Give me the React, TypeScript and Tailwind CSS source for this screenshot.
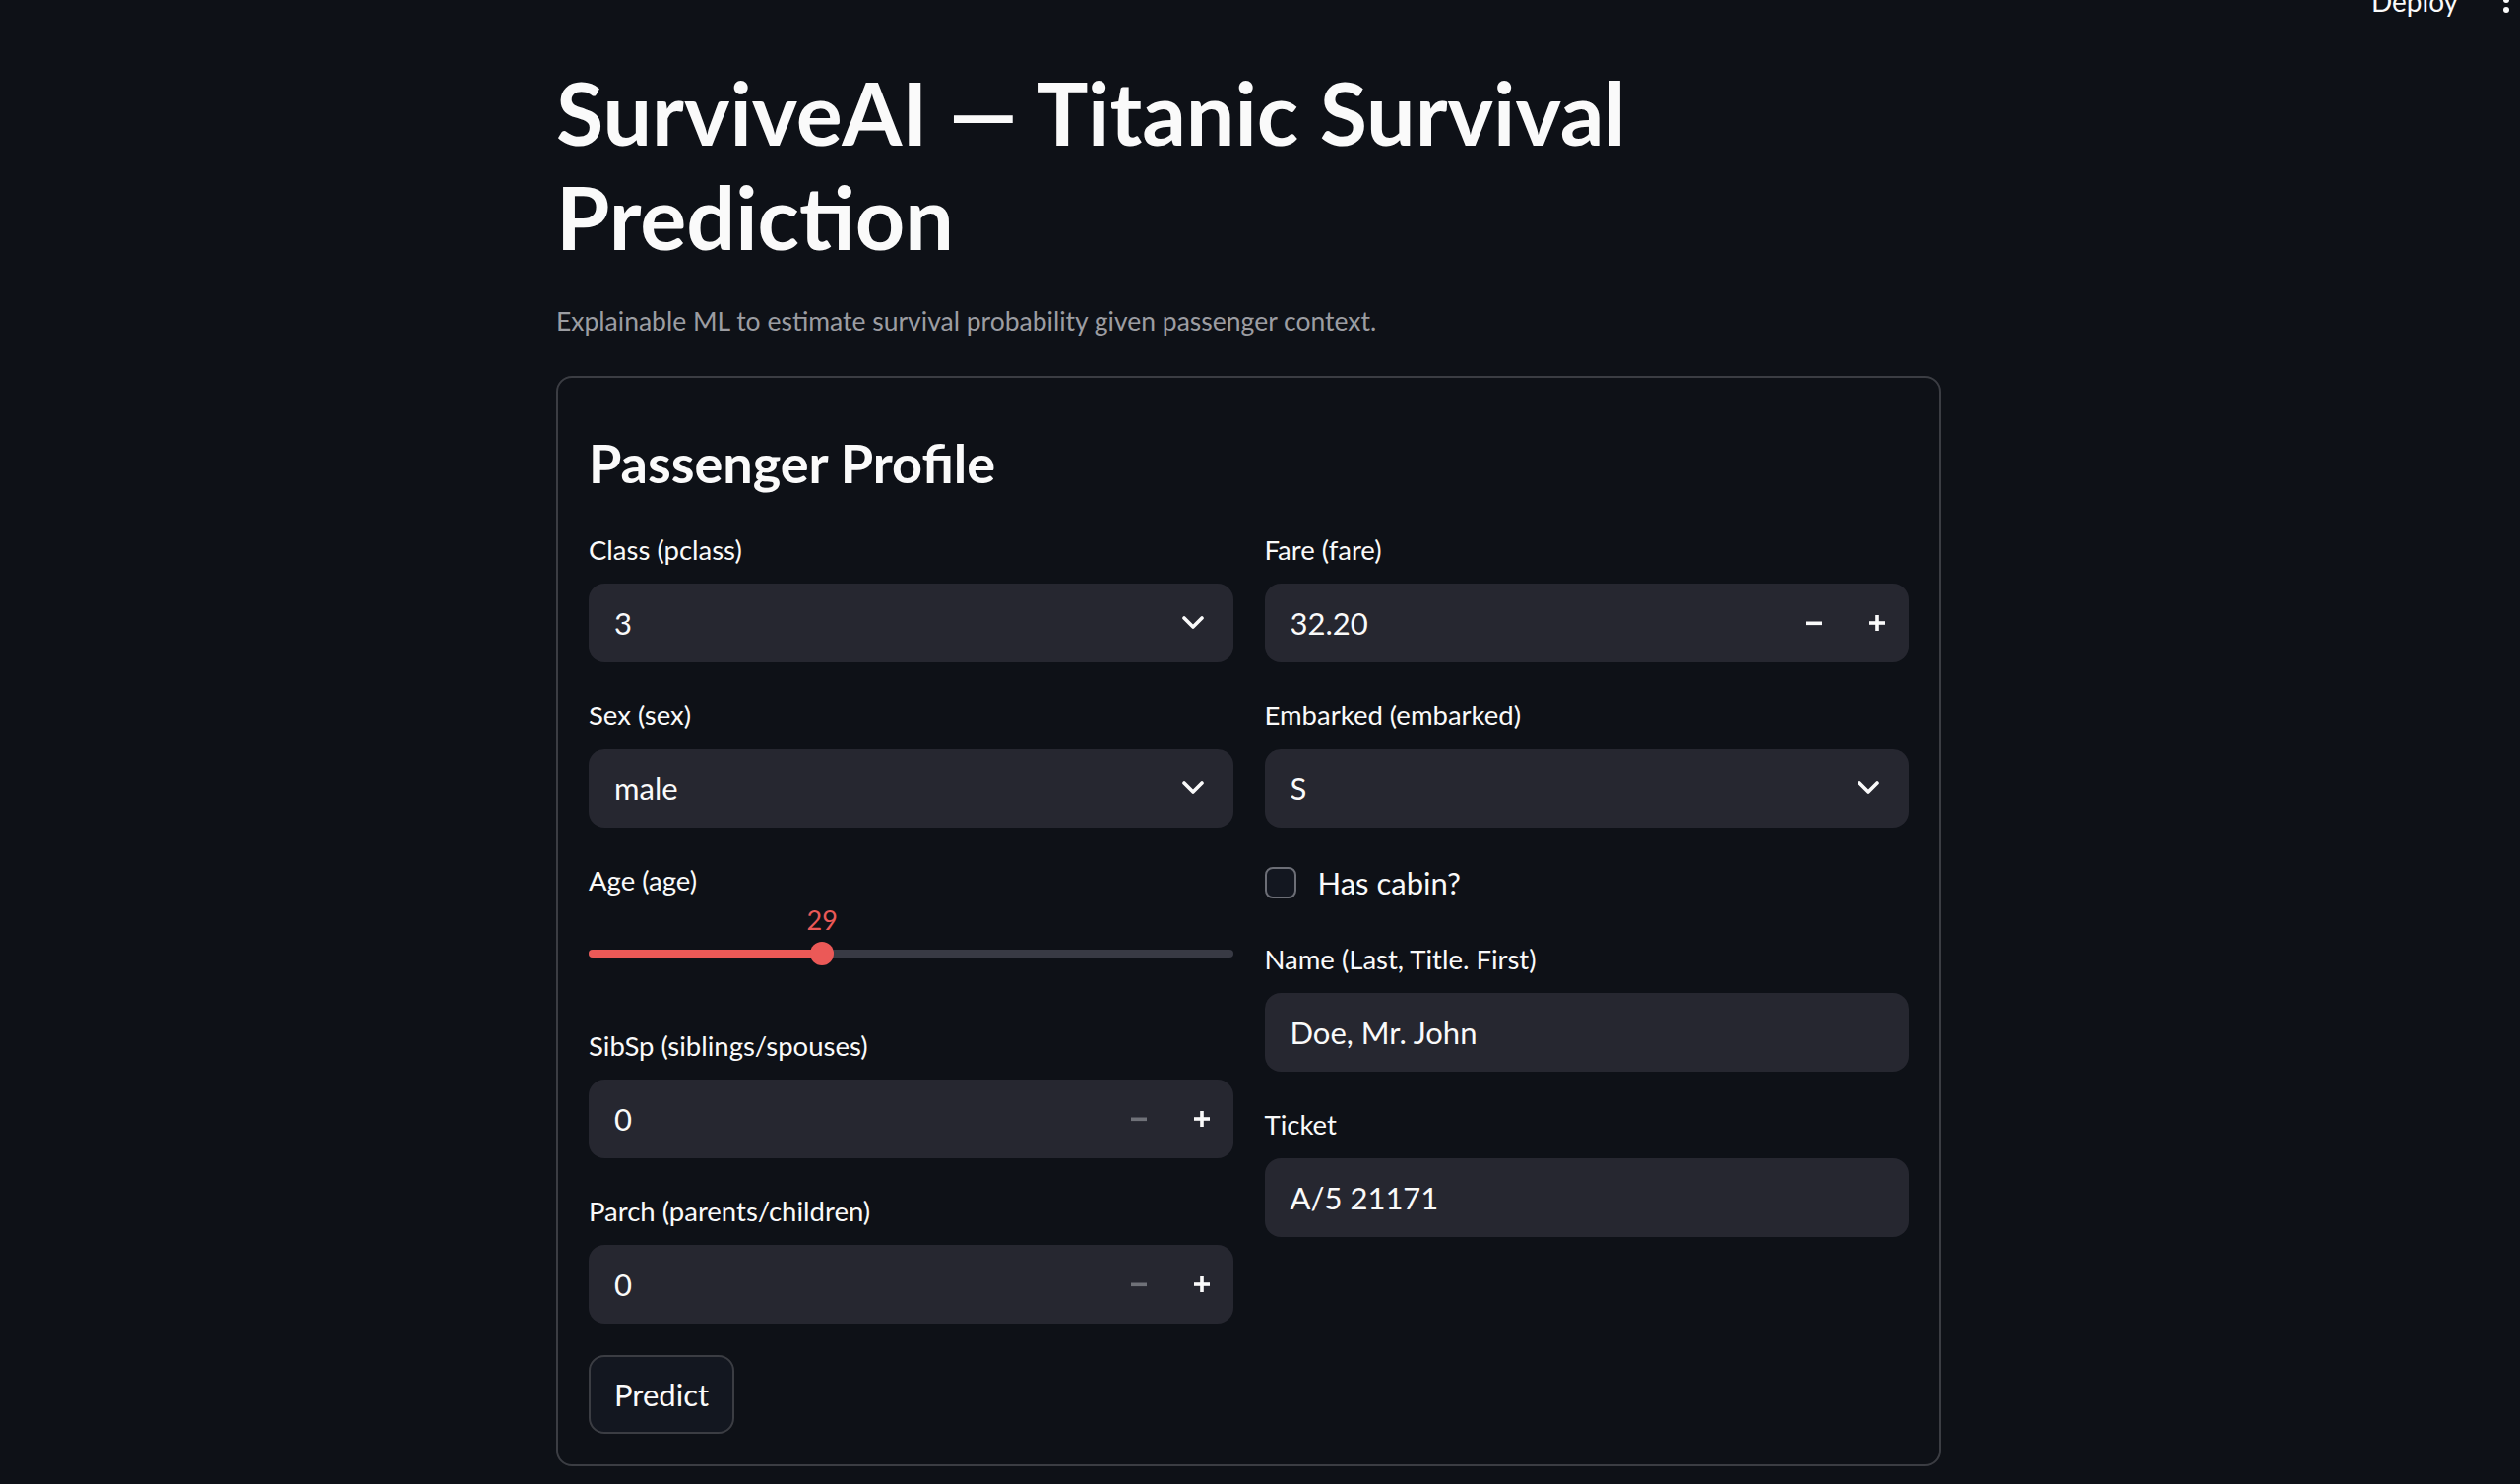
import { useState } from "react";

const font = { fontFamily: '"Lato", "Noto Sans", sans-serif' };

function Chevron() {
  return (
    <svg width="22" height="14" viewBox="0 0 22 14" className="mr-[30px]">
      <polyline points="2,2 11,11 20,2" fill="none" stroke="#fafafa" strokeWidth="3.6" strokeLinecap="round" strokeLinejoin="round" />
    </svg>
  );
}

function Minus({ muted }: { muted?: boolean }) {
  return (
    <svg width="18" height="18" viewBox="0 0 18 18">
      <rect x="1" y="7.5" width="16" height="3.6" fill={muted ? "#6f7178" : "#fafafa"} />
    </svg>
  );
}

function Plus() {
  return (
    <svg width="18" height="18" viewBox="0 0 18 18">
      <rect x="1" y="7.2" width="16" height="3.6" fill="#fafafa" />
      <rect x="7.2" y="1" width="3.6" height="16" fill="#fafafa" />
    </svg>
  );
}

function Label({ text }: { text: string }) {
  return <div className="h-[42px] mb-[14px] flex items-center text-[27.5px] text-[#fafafa]">{text}</div>;
}

function SelectField({ label, value }: { label: string; value: string }) {
  return (
    <div className="flex flex-col">
      <Label text={label} />
      <div className="h-[80px] rounded-[16px] bg-[#262730] flex items-center justify-between pl-[26px] text-[31px] text-[#fafafa]">
        <span>{value}</span>
        <Chevron />
      </div>
    </div>
  );
}

function NumberField({ label, value, min }: { label: string; value: string; min?: boolean }) {
  return (
    <div className="flex flex-col">
      <Label text={label} />
      <div className="h-[80px] rounded-[16px] bg-[#262730] flex items-center pl-[26px] text-[31px] text-[#fafafa]">
        <span className="flex-1">{value}</span>
        <div className="w-[64px] h-full flex items-center justify-center">
          <Minus muted={min} />
        </div>
        <div className="w-[64px] h-full flex items-center justify-center">
          <Plus />
        </div>
      </div>
    </div>
  );
}

function TextField({ label, value }: { label: string; value: string }) {
  return (
    <div className="flex flex-col">
      <Label text={label} />
      <div className="h-[80px] rounded-[16px] bg-[#262730] flex items-center pl-[26px] text-[31px] text-[#fafafa]">
        {value}
      </div>
    </div>
  );
}

function AgeSlider({ age }: { age: number }) {
  const pct = (age / 80) * 100;
  return (
    <div className="flex flex-col">
      <Label text="Age (age)" />
      <div className="relative h-[80px]">
        <div className="absolute left-0 right-0 top-[36px] h-[8px] rounded-full bg-[#383a44]">
          <div className="h-full rounded-full bg-[#eb5957]" style={{ width: `${pct}%` }} />
        </div>
        <div
          className="absolute top-[28px] w-[24px] h-[24px] -ml-[12px] rounded-full bg-[#eb5957]"
          style={{ left: `${pct}%` }}
        />
        <div
          className="absolute top-[-10px] -translate-x-1/2 text-[27px] leading-[1.2] text-[#eb5957]"
          style={{ left: `${pct}%` }}
        >
          {age}
        </div>
      </div>
    </div>
  );
}

export default function App() {
  const [cabin, setCabin] = useState(false);

  return (
    <div className="min-h-screen bg-[#0e1117] text-[#fafafa] overflow-hidden" style={font}>
      <div className="h-[40px] -mt-[19px] flex items-center justify-end pr-[11px]">
        <span className="text-[28px] leading-none mr-[46px]">Deploy</span>
        <div className="flex flex-col gap-[4px] -mt-[3px]">
          <span className="w-[6px] h-[6px] rounded-full bg-[#fafafa]" />
          <span className="w-[6px] h-[6px] rounded-full bg-[#fafafa]" />
          <span className="w-[6px] h-[6px] rounded-full bg-[#fafafa]" />
        </div>
      </div>

      <main className="ml-[565px] w-[1407px] pt-[41px] pb-[40px]">
        <h1 className="text-[88px] font-bold leading-[1.2]">
          SurviveAI — Titanic Survival Prediction
        </h1>
        <p className="mt-[32px] text-[26.5px] leading-[1.6] text-[#9c9da2]">
          Explainable ML to estimate survival probability given passenger context.
        </p>

        <section className="mt-[34px] border-2 border-[#3b3d43] rounded-[16px] px-[31px] pt-[55px] pb-[31px]">
          <h3 className="text-[54px] font-bold leading-[1.2] mb-[34px]">Passenger Profile</h3>

          <div className="grid grid-cols-2 gap-x-[32px]">
            <div className="flex flex-col gap-[32px]">
              <SelectField label="Class (pclass)" value="3" />
              <SelectField label="Sex (sex)" value="male" />
              <AgeSlider age={29} />
              <NumberField label="SibSp (siblings/spouses)" value="0" min />
              <NumberField label="Parch (parents/children)" value="0" min />
            </div>
            <div className="flex flex-col gap-[32px]">
              <NumberField label="Fare (fare)" value="32.20" />
              <SelectField label="Embarked (embarked)" value="S" />
              <label className="h-[48px] flex items-center gap-[22px] cursor-pointer">
                <input type="checkbox" className="hidden" checked={cabin} onChange={(e) => setCabin(e.target.checked)} />
                <span className="w-[32px] h-[32px] rounded-[8px] border-2 border-[#6c6e76] bg-[#131720]" />
                <span className="text-[31px]">Has cabin?</span>
              </label>
              <TextField label="Name (Last, Title. First)" value="Doe, Mr. John" />
              <TextField label="Ticket" value="A/5 21171" />
            </div>
          </div>

          <button className="mt-[32px] h-[80px] px-[24px] rounded-[16px] border-2 border-[#3b3d43] bg-[#131720] text-[31px] text-[#fafafa]">
            Predict
          </button>
        </section>
      </main>
    </div>
  );
}
